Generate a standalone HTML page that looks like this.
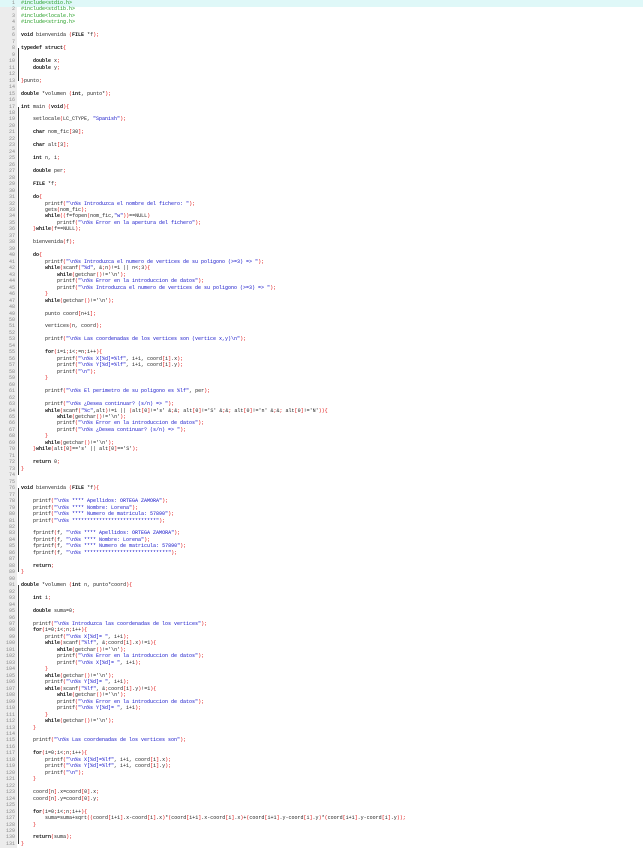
<!DOCTYPE html>
<html><head><meta charset="utf-8"><style>
html,body{margin:0;padding:0;background:#fff;width:643px;height:848px;overflow:hidden}
#g{position:absolute;left:0;top:0;width:17px;height:848px;background:#ececec}
#fold{position:absolute;left:17px;top:0;width:3px;height:848px;background:#fff}
#hl{position:absolute;left:0;top:0;width:643px;height:7px;background:#dff8f8}
#c{position:absolute;left:0;top:0;font-family:"Liberation Mono",monospace;font-size:5px;line-height:6.47px;white-space:pre;color:#222}
.ln{display:inline-block;width:15px;text-align:right;color:#8a8a8a;margin-right:6px}
.k{font-weight:bold;color:#111}
.s{color:#1010c8}
.p{color:#e01010}
.g{color:#1a9a1a}
.f{position:absolute;left:18px;width:1px;background:#333}
</style></head><body>
<div id="g"></div><div id="fold"></div><div id="hl"></div>
<div id="c"></div>
<script>
var L=[
'#include<stdio.h>','#include<stdlib.h>','#include<locale.h>','#include<string.h>','',
'void bienvenida (FILE *f);','',
'typedef struct{','','    double x;','    double y;','','}punto;','',
'double *volumen (int, punto*);','',
'int main (void){','',
'    setlocale(LC_CTYPE, "Spanish");','',
'    char nom_fic[30];','','    char alt[3];','','    int n, i;','','    double per;','','    FILE *f;','',
'    do{',
'        printf("\\n%s Introduzca el nombre del fichero: ");',
'        gets(nom_fic);',
'        while((f=fopen(nom_fic,"w"))==NULL)',
'            printf("\\n%s Error en la apertura del fichero");',
'    }while(f==NULL);','',
'    bienvenida(f);','',
'    do{',
'        printf("\\n%s Introduzca el numero de vertices de su poligono (>=3) => ");',
'        while(scanf("%d", &n)!=1 || n<3){',
'            while(getchar()!=\'\\n\');',
'            printf("\\n%s Error en la introduccion de datos");',
'            printf("\\n%s Introduzca el numero de vertices de su poligono (>=3) => ");',
'        }',
'        while(getchar()!=\'\\n\');','',
'        punto coord[n+1];','',
'        vertices(n, coord);','',
'        printf("\\n%s Las coordenadas de los vertices son (vertice x,y)\\n");','',
'        for(i=1;i<=n;i++){',
'            printf("\\n%s X[%d]=%lf", i+1, coord[i].x);',
'            printf("\\n%s Y[%d]=%lf", i+1, coord[i].y);',
'            printf("\\n");',
'        }','',
'        printf("\\n%s El perimetro de su poligono es %lf", per);','',
'        printf("\\n%s ¿Desea continuar? (s/n) => ");',
'        while(scanf("%c",alt)!=1 || (alt[0]!=\'s\' && alt[0]!=\'S\' && alt[0]!=\'n\' && alt[0]!=\'N\')){',
'            while(getchar()!=\'\\n\');',
'            printf("\\n%s Error en la introduccion de datos");',
'            printf("\\n%s ¿Desea continuar? (s/n) => ");',
'        }',
'        while(getchar()!=\'\\n\');',
'    }while(alt[0]==\'s\' || alt[0]==\'S\');','',
'    return 0;','}','','',
'void bienvenida (FILE *f){','',
'    printf("\\n%s **** Apellidos: ORTEGA ZAMORA");',
'    printf("\\n%s **** Nombre: Lorena");',
'    printf("\\n%s **** Numero de matricula: 57890");',
'    printf("\\n%s ****************************");','',
'    fprintf(f, "\\n%s **** Apellidos: ORTEGA ZAMORA");',
'    fprintf(f, "\\n%s **** Nombre: Lorena");',
'    fprintf(f, "\\n%s **** Numero de matricula: 57890");',
'    fprintf(f, "\\n%s ****************************");','',
'    return;','}','',
'double *volumen (int n, punto*coord){','',
'    int i;','',
'    double suma=0;','',
'    printf("\\n%s Introduzca las coordenadas de los vertices");',
'    for(i=0;i<n;i++){',
'        printf("\\n%s X[%d]= ", i+1);',
'        while(scanf("%lf", &coord[i].x)!=1){',
'            while(getchar()!=\'\\n\');',
'            printf("\\n%s Error en la introduccion de datos");',
'            printf("\\n%s X[%d]= ", i+1);',
'        }',
'        while(getchar()!=\'\\n\');',
'        printf("\\n%s Y[%d]= ", i+1);',
'        while(scanf("%lf", &coord[i].y)!=1){',
'            while(getchar()!=\'\\n\');',
'            printf("\\n%s Error en la introduccion de datos");',
'            printf("\\n%s Y[%d]= ", i+1);',
'        }',
'        while(getchar()!=\'\\n\');',
'    }','',
'    printf("\\n%s Las coordenadas de los vertices son");','',
'    for(i=0;i<n;i++){',
'        printf("\\n%s X[%d]=%lf", i+1, coord[i].x);',
'        printf("\\n%s Y[%d]=%lf", i+1, coord[i].y);',
'        printf("\\n");',
'    }','',
'    coord[n].x=coord[0].x;',
'    coord[n].y=coord[0].y;','',
'    for(i=0;i<n;i++){',
'        suma=suma+sqrt((coord[i+1].x-coord[i].x)*(coord[i+1].x-coord[i].x)+(coord[i+1].y-coord[i].y)*(coord[i+1].y-coord[i].y));',
'    }','',
'    return(suma);','}'
];
var KW=/\b(void|typedef|struct|double|int|char|do|while|for|return|FILE)\b/g;
function esc(t){return t.replace(/&/g,'&amp;').replace(/</g,'&lt;').replace(/>/g,'&gt;');}
function hl(line){
  if(line.indexOf('#include')===0)return '<span class="g">'+esc(line)+'</span>';
  var out='',parts=line.split(/("(?:[^"\\]|\\.)*")/);
  parts.forEach(function(p,i){
    if(i%2){out+='<span class="s">'+esc(p)+'</span>';return;}
    var e=esc(p).replace(KW,'<span class="k">$1</span>');
    e=e.replace(/([(){}\[\];])/g,'<span class="p">$1</span>');
    out+=e;
  });
  return out;
}
var h='';
L.forEach(function(l,i){h+='<span class="ln">'+(i+1)+'</span>'+hl(l)+'\n';});
document.getElementById('c').innerHTML=h;
var folds=[[8,13],[17,74],[31,36],[40,71],[76,89],[91,131]];
folds.forEach(function(f){var d=document.createElement('div');d.className='f';d.style.top=((f[0]-1)*6.47+3)+'px';d.style.height=((f[1]-f[0])*6.47)+'px';document.body.appendChild(d);});
</script>
</body></html>
